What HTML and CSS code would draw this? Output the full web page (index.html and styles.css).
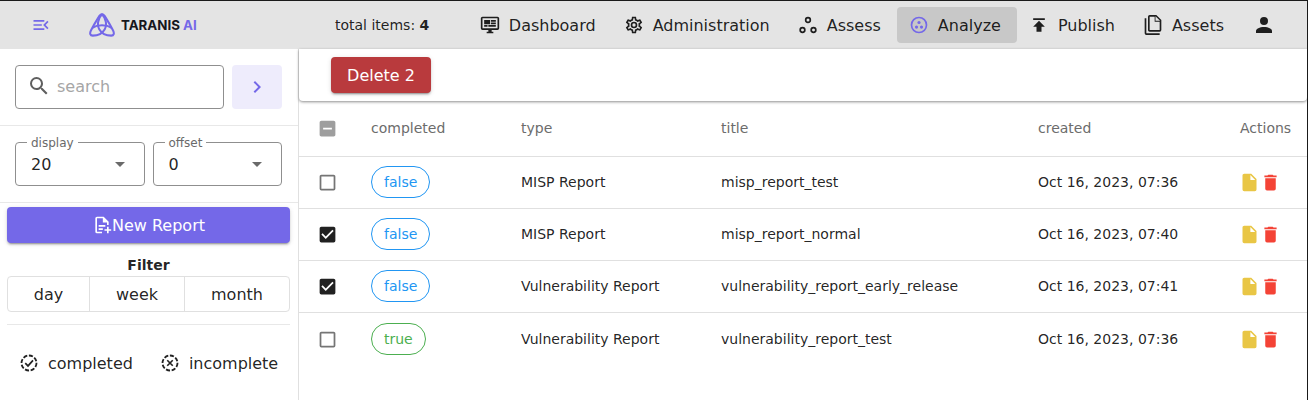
FILE: index.html
```html
<!DOCTYPE html>
<html lang="en">
<head>
    <meta charset="UTF-8">
    <title>Taranis AI</title>
    <link rel="stylesheet" href="styles.css">
</head>
<body>
    <svg class="sprites" width="0" height="0">
        <symbol id="i-file" viewBox="0 0 24 24"><path d="M13,9V3.5L18.5,9M6,2C4.89,2 4,2.89 4,4V20A2,2 0 0,0 6,22H18A2,2 0 0,0 20,20V8L14,2H6Z"/></symbol>
        <symbol id="i-delete" viewBox="0 0 24 24"><path d="M19,4H15.5L14.5,3H9.5L8.5,4H5V6H19M6,19A2,2 0 0,0 8,21H16A2,2 0 0,0 18,19V7H6V19Z"/></symbol>
        <symbol id="i-blank" viewBox="0 0 24 24"><path d="M19,3H5C3.89,3 3,3.89 3,5V19A2,2 0 0,0 5,21H19A2,2 0 0,0 21,19V5C21,3.89 20.1,3 19,3M19,5V19H5V5H19Z"/></symbol>
        <symbol id="i-marked" viewBox="0 0 24 24"><path d="M10,17L5,12L6.41,10.59L10,14.17L17.59,6.58L19,8M19,3H5C3.89,3 3,3.89 3,5V19A2,2 0 0,0 5,21H19A2,2 0 0,0 21,19V5C21,3.89 20.1,3 19,3Z"/></symbol>
        <symbol id="i-minus" viewBox="0 0 24 24"><path d="M17,13H7V11H17M19,3H5C3.89,3 3,3.89 3,5V19C3,20.1 3.9,21 5,21H19C20.1,21 21,20.1 21,19V5C21,3.89 20.1,3 19,3Z"/></symbol>
        <symbol id="i-caret" viewBox="0 0 24 24"><path d="M7,10L12,15L17,10H7Z"/></symbol>
    </svg>

    <header class="topbar">
        <svg class="icon menu-toggle" viewBox="0 0 24 24"><path d="M21,15.61L19.59,17L14.58,12L19.59,7L21,8.39L17.44,12L21,15.61M3,6H16V8H3V6M3,13V11H13V13H3M3,18V16H16V18H3Z"/></svg>
        <div class="logo">
            <svg class="logo-mark" viewBox="0 0 28 26">
                <path d="M14 1.500 C9.500 6 8.500 13 11 17.500 C13.500 22 19 24.500 24 24.500 C27 24.500 27.500 22 26 19 C24 15 20.500 9 18 5 C16.500 2.500 15.500 1 14 1.500 Z"/>
                <path d="M14 1.500 C18.500 6 19.500 13 17 17.500 C14.500 22 9 24.500 4 24.500 C1 24.500 0.500 22 2 19 C4 15 7.500 9 10 5 C11.500 2.500 12.500 1 14 1.500 Z"/>
                <path d="M3.500 16 C9 12.500 19 12.500 24.500 16"/>
            </svg>
            <span class="logo-text">TARANIS <span class="logo-ai">AI</span></span>
        </div>
        <div class="total">total items: <strong>4</strong></div>
        <nav class="nav">
            <a class="nav-btn">
                <svg class="icon" viewBox="0 0 24 24"><path d="M21,16H3V4H21M21,2H3C1.890,2 1,2.890 1,4V16A2,2 0 0,0 3,18H10V20H8V22H16V20H14V18H21A2,2 0 0,0 23,16V4C23,2.890 22.100,2 21,2M5,6H12V11H5V6M13,6H19V8H13V6M13,9H19V11H13V9M5,12H9V14H5V12M10,12H19V14H10V12Z"/></svg>
                Dashboard
            </a>
            <a class="nav-btn">
                <svg class="icon" viewBox="0 0 24 24"><path d="M12,8A4,4 0 0,1 16,12A4,4 0 0,1 12,16A4,4 0 0,1 8,12A4,4 0 0,1 12,8M12,10A2,2 0 0,0 10,12A2,2 0 0,0 12,14A2,2 0 0,0 14,12A2,2 0 0,0 12,10M10,22C9.750,22 9.540,21.820 9.500,21.580L9.130,18.930C8.500,18.680 7.960,18.340 7.440,17.940L4.950,18.950C4.730,19.030 4.460,18.950 4.340,18.730L2.340,15.270C2.210,15.050 2.270,14.780 2.460,14.630L4.570,12.970L4.500,12L4.570,11L2.460,9.370C2.270,9.220 2.210,8.950 2.340,8.730L4.340,5.270C4.460,5.050 4.730,4.960 4.950,5.050L7.440,6.050C7.960,5.660 8.500,5.320 9.130,5.070L9.500,2.420C9.540,2.180 9.750,2 10,2H14C14.250,2 14.460,2.180 14.500,2.420L14.870,5.070C15.500,5.320 16.040,5.660 16.560,6.050L19.050,5.050C19.270,4.960 19.540,5.050 19.660,5.270L21.660,8.730C21.790,8.950 21.730,9.220 21.540,9.370L19.430,11L19.500,12L19.430,13L21.540,14.630C21.730,14.780 21.790,15.050 21.660,15.270L19.660,18.730C19.540,18.950 19.270,19.040 19.050,18.950L16.560,17.950C16.040,18.340 15.500,18.680 14.870,18.930L14.500,21.580C14.460,21.820 14.250,22 14,22H10M11.250,4L10.880,6.610C9.680,6.860 8.620,7.500 7.850,8.390L5.440,7.350L4.690,8.650L6.800,10.200C6.400,11.370 6.400,12.640 6.800,13.800L4.680,15.360L5.430,16.660L7.860,15.620C8.630,16.500 9.680,17.140 10.870,17.380L11.240,20H12.760L13.130,17.390C14.320,17.140 15.370,16.500 16.140,15.620L18.570,16.660L19.320,15.360L17.200,13.810C17.600,12.640 17.600,11.370 17.200,10.200L19.310,8.650L18.560,7.350L16.150,8.390C15.380,7.500 14.320,6.860 13.120,6.620L12.750,4H11.250Z"/></svg>
                Administration
            </a>
            <a class="nav-btn">
                <svg class="icon outline" viewBox="0 0 24 24"><circle cx="12" cy="6" r="2.800"/><circle cx="5.400" cy="18" r="2.800"/><circle cx="18.600" cy="18" r="2.800"/></svg>
                Assess
            </a>
            <a class="nav-btn active">
                <svg class="icon accent" viewBox="0 0 24 24"><path d="M12,2A10,10 0 0,0 2,12A10,10 0 0,0 12,22A10,10 0 0,0 22,12A10,10 0 0,0 12,2M12,20A8,8 0 0,1 4,12A8,8 0 0,1 12,4A8,8 0 0,1 20,12A8,8 0 0,1 12,20Z"/><circle cx="12" cy="9" r="1.900"/><circle cx="9" cy="14.500" r="1.900"/><circle cx="15" cy="14.500" r="1.900"/></svg>
                Analyze
            </a>
            <a class="nav-btn">
                <svg class="icon" viewBox="0 0 24 24"><path d="M5,4V6H19V4H5M5,14H9V20H15V14H19L12,7L5,14Z"/></svg>
                Publish
            </a>
            <a class="nav-btn">
                <svg class="icon" viewBox="0 0 24 24"><path d="M15,7H20.500L15,1.500V7M8,0H16L22,6V18A2,2 0 0,1 20,20H8C6.890,20 6,19.100 6,18V2A2,2 0 0,1 8,0M4,4V22H20V24H4A2,2 0 0,1 2,22V4H4M8,2V18H20V8H14V2H8Z"/></svg>
                Assets
            </a>
            <a class="nav-user">
                <svg class="icon user-icon" viewBox="0 0 24 24"><path d="M12,4A4,4 0 0,1 16,8A4,4 0 0,1 12,12A4,4 0 0,1 8,8A4,4 0 0,1 12,4M12,14C16.420,14 20,15.790 20,18V20H4V18C4,15.790 7.580,14 12,14Z"/></svg>
            </a>
        </nav>
    </header>

    <div class="page">
        <aside class="sidebar">
            <div class="search-row">
                <div class="search-box">
                    <svg class="icon search-icon" viewBox="0 0 24 24"><path d="M9.500,3A6.500,6.500 0 0,1 16,9.500C16,11.110 15.410,12.590 14.440,13.730L14.710,14H15.500L20.500,19L19,20.500L14,15.500V14.710L13.730,14.440C12.590,15.410 11.110,16 9.500,16A6.500,6.500 0 0,1 3,9.500A6.500,6.500 0 0,1 9.500,3M9.500,5C7,5 5,7 5,9.500C5,12 7,14 9.500,14C12,14 14,12 14,9.500C14,7 12,5 9.500,5Z"/></svg>
                    <span class="placeholder">search</span>
                </div>
                <button class="search-go">
                    <svg class="icon accent chevron" viewBox="0 0 24 24"><path d="M8.590,16.580L13.170,12L8.590,7.410L10,6L16,12L10,18L8.590,16.580Z"/></svg>
                </button>
            </div>
            <div class="select-row">
                <div class="select">
                    <span class="select-label">display</span>
                    <span class="select-value">20</span>
                    <svg class="icon caret"><use href="#i-caret"/></svg>
                </div>
                <div class="select">
                    <span class="select-label">offset</span>
                    <span class="select-value">0</span>
                    <svg class="icon caret"><use href="#i-caret"/></svg>
                </div>
            </div>
            <div class="side-actions">
                <button class="new-report">
                    <svg class="icon" viewBox="0 0 24 24"><path d="M14,2H6A2,2 0 0,0 4,4V20A2,2 0 0,0 6,22H12V20H6V4H13V9H18V12H20V8L14,2M18,14V17H15V19H18V22H20V19H23V17H20V14H18M8,12H16V14H8V12M8,16H13V18H8V16Z"/></svg>New Report
                </button>
                <div class="filter-title">Filter</div>
                <div class="btn-group">
                    <a class="day">day</a>
                    <a class="week">week</a>
                    <a class="month">month</a>
                </div>
                <hr class="side-rule">
                <div class="chips">
                    <span class="chip">
                        <svg class="icon" viewBox="0 0 24 24"><circle class="dashed" cx="12" cy="12" r="9"/><path d="M7.500 12.200 L10.800 15.500 L16.800 8.800" class="tick"/></svg>
                        completed
                    </span>
                    <span class="chip">
                        <svg class="icon" viewBox="0 0 24 24"><circle class="dashed" cx="12" cy="12" r="9"/><path d="M8.700 8.700 L15.300 15.300 M15.300 8.700 L8.700 15.300" class="tick"/></svg>
                        incomplete
                    </span>
                </div>
            </div>
        </aside>

        <main class="content">
            <div class="toolbar">
                <button class="delete-btn">Delete 2</button>
            </div>
            <table class="reports">
                <thead>
                    <tr>
                        <th class="col-check"><svg class="icon check minus"><use href="#i-minus"/></svg></th>
                        <th class="col-status">completed</th>
                        <th class="col-type">type</th>
                        <th class="col-title">title</th>
                        <th class="col-created">created</th>
                        <th class="col-actions">Actions</th>
                    </tr>
                </thead>
                <tbody>
                    <tr>
                        <td><svg class="icon check blank"><use href="#i-blank"/></svg></td>
                        <td><span class="pill pill-false">false</span></td>
                        <td>MISP Report</td>
                        <td>misp_report_test</td>
                        <td>Oct 16, 2023, 07:36</td>
                        <td class="actions"><svg class="icon file"><use href="#i-file"/></svg><svg class="icon trash"><use href="#i-delete"/></svg></td>
                    </tr>
                    <tr>
                        <td><svg class="icon check"><use href="#i-marked"/></svg></td>
                        <td><span class="pill pill-false">false</span></td>
                        <td>MISP Report</td>
                        <td>misp_report_normal</td>
                        <td>Oct 16, 2023, 07:40</td>
                        <td class="actions"><svg class="icon file"><use href="#i-file"/></svg><svg class="icon trash"><use href="#i-delete"/></svg></td>
                    </tr>
                    <tr>
                        <td><svg class="icon check"><use href="#i-marked"/></svg></td>
                        <td><span class="pill pill-false">false</span></td>
                        <td>Vulnerability Report</td>
                        <td>vulnerability_report_early_release</td>
                        <td>Oct 16, 2023, 07:41</td>
                        <td class="actions"><svg class="icon file"><use href="#i-file"/></svg><svg class="icon trash"><use href="#i-delete"/></svg></td>
                    </tr>
                    <tr>
                        <td><svg class="icon check blank"><use href="#i-blank"/></svg></td>
                        <td><span class="pill pill-true">true</span></td>
                        <td>Vulnerability Report</td>
                        <td>vulnerability_report_test</td>
                        <td>Oct 16, 2023, 07:36</td>
                        <td class="actions"><svg class="icon file"><use href="#i-file"/></svg><svg class="icon trash"><use href="#i-delete"/></svg></td>
                    </tr>
                </tbody>
            </table>
        </main>
    </div>
</body>
</html>
```

FILE: styles.css
```css
* {
    box-sizing: border-box;
}

html, body {
    height: 100%;
}

body {
    margin: 0;
    overflow: hidden;
    font-family: "DejaVu Sans", sans-serif;
    font-size: 14px;
    color: rgba(0, 0, 0, 0.87);
    background: white;
    border-top: 1px solid #1a1a1a;
    border-right: 1px solid #1a1a1a;
}

.sprites {
    display: none;
}

.icon {
    width: 20px;
    height: 20px;
    flex: none;
    fill: currentColor;
}

.accent {
    fill: #7468e8;
}

button {
    font-family: inherit;
    border: none;
    cursor: pointer;
}

/* top bar */
.topbar {
    display: flex;
    align-items: center;
    height: 48px;
    background: #e4e4e4;
    padding-right: 20px;
}

.menu-toggle {
    width: 20px;
    margin-left: 31px;
    fill: #7468e8;
}

.logo {
    display: flex;
    align-items: center;
    margin-left: 38px;
    width: 246px;
}

.logo-mark {
    width: 26px;
    height: 24px;
    fill: none;
    stroke: #7468e8;
    stroke-width: 2.2;
}

.logo-text {
    margin-left: 6px;
    font-family: Inter, sans-serif;
    font-size: 13.3px;
    font-weight: 700;
    color: #16161c;
}

.logo-ai {
    color: #7468e8;
}

.total {
    white-space: nowrap;
}

.nav {
    display: flex;
    align-items: center;
    margin-left: auto;
}

.nav-btn {
    display: flex;
    align-items: center;
    height: 36px;
    padding: 0 16px 0 12px;
    border-radius: 4px;
    font-size: 16px;
    gap: 9px;
    white-space: nowrap;
}

.nav-btn.active {
    background: #c8c8c8;
}

.outline {
    fill: none;
    stroke: currentColor;
    stroke-width: 2;
}

.nav-user {
    display: flex;
    align-items: center;
    justify-content: center;
    width: 47px;
}

.user-icon {
    width: 24px;
    height: 24px;
}

/* page */
.page {
    display: flex;
    height: 351px;
}

.sidebar {
    width: 299px;
    flex: none;
    border-right: 1px solid #e0e0e0;
}

.search-row {
    display: flex;
    gap: 8px;
    padding: 16px 16px 16px 15px;
    border-bottom: 1px solid #e8e8e8;
}

.search-box {
    display: flex;
    align-items: center;
    width: 209px;
    height: 44px;
    padding: 0 0 2px 11px;
    border: 1px solid #8f8f8f;
    border-radius: 4px;
}

.search-icon {
    width: 24px;
    height: 24px;
    fill: #5f5f5f;
}

.placeholder {
    margin-left: 6px;
    font-size: 16px;
    color: #a6a6a6;
}

.search-go {
    display: flex;
    align-items: center;
    justify-content: center;
    width: 50px;
    height: 44px;
    padding: 0;
    border-radius: 4px;
    background: #eeecfc;
}

.chevron {
    width: 24px;
    height: 24px;
}

.select-row {
    display: flex;
    gap: 8px;
    padding: 16px 16px 16px 15px;
    border-bottom: 1px solid #e8e8e8;
}

.select {
    position: relative;
    display: flex;
    align-items: center;
    justify-content: space-between;
    flex: 1;
    height: 44px;
    padding: 0 12px 0 15px;
    border: 1px solid #8f8f8f;
    border-radius: 4px;
}

.select-label {
    position: absolute;
    top: -7px;
    left: 11px;
    padding: 0 4px;
    font-size: 12px;
    line-height: 14px;
    color: #6a6a6a;
    background: white;
}

.select-value {
    font-size: 16px;
}

.caret {
    width: 24px;
    height: 24px;
    fill: #6a6a6a;
}

.side-actions {
    padding: 4px 8px 0 7px;
}

.new-report {
    display: flex;
    align-items: center;
    justify-content: center;
    width: 100%;
    height: 36px;
    border-radius: 4px;
    background: #7468e8;
    color: white;
    font-size: 16px;
    box-shadow: 0 3px 1px -2px rgba(0, 0, 0, 0.2), 0 2px 2px rgba(0, 0, 0, 0.14), 0 1px 5px rgba(0, 0, 0, 0.12);
}

.filter-title {
    margin-top: 14px;
    font-size: 14px;
    font-weight: 700;
    line-height: 17px;
    text-align: center;
}

.btn-group {
    display: flex;
    height: 36px;
    margin-top: 2px;
    border: 1px solid #e0e0e0;
    border-radius: 4px;
    font-size: 16px;
}

.btn-group a {
    display: flex;
    align-items: center;
    justify-content: center;
    border-right: 1px solid #e0e0e0;
}

.btn-group .day {
    width: 82px;
}

.btn-group .week {
    width: 95px;
}

.btn-group .month {
    flex: 1;
    border-right: none;
}

.side-rule {
    margin: 12px 0 0;
    border: none;
    border-top: 1px solid #e8e8e8;
}

.chips {
    display: flex;
    gap: 27px;
    margin-top: 28px;
    padding-left: 12px;
    font-size: 16px;
}

.chip {
    display: flex;
    align-items: center;
    gap: 9px;
    white-space: nowrap;
}

.dashed {
    fill: none;
    stroke: currentColor;
    stroke-width: 2.2;
    stroke-dasharray: 5 2;
}

.tick {
    fill: none;
    stroke: currentColor;
    stroke-width: 2;
}

/* report table */
.content {
    flex: 1;
    min-width: 0;
}

.toolbar {
    height: 52px;
    padding: 8px 0 0 32px;
    border-radius: 0 0 4px 4px;
    box-shadow: 0 1px 3px rgba(0, 0, 0, 0.45);
}

.delete-btn {
    width: 100px;
    height: 36px;
    border-radius: 4px;
    background: #b93a3d;
    color: white;
    font-size: 16px;
    box-shadow: 0 3px 1px -2px rgba(0, 0, 0, 0.2), 0 2px 2px rgba(0, 0, 0, 0.14), 0 1px 5px rgba(0, 0, 0, 0.12);
}

.reports {
    width: 100%;
    table-layout: fixed;
    border-collapse: collapse;
}

.reports th,
.reports td {
    padding: 0 16px;
    text-align: left;
    font-weight: 400;
    white-space: nowrap;
}

.reports th {
    height: 55px;
    color: #6c6c6c;
    border-bottom: 1px solid #e0e0e0;
}

.reports td {
    height: 52px;
    border-bottom: 1px solid #e0e0e0;
}

.reports tr:last-child td {
    height: 54px;
    border-bottom: none;
}

.col-check {
    width: 56px;
}

.col-status {
    width: 150px;
}

.col-type {
    width: 200px;
}

.col-title {
    width: 317px;
}

.col-created {
    width: 202px;
}

.reports .col-actions {
    text-align: right;
}

.check {
    display: block;
    width: 21px;
    height: 21px;
    margin-left: 1.5px;
}

.blank {
    fill: #757575;
}

.minus {
    fill: #9e9e9e;
}

.pill {
    display: inline-flex;
    align-items: center;
    height: 32px;
    padding: 0 12px;
    border-radius: 16px;
    border: 1px solid currentColor;
}

.pill-false {
    color: #2196f3;
}

.pill-true {
    color: #4caf50;
}

.reports .actions {
    padding-left: 15px;
}

.file {
    fill: #e9c645;
}

.trash {
    fill: #f44336;
}

.file, .trash {
    width: 21px;
    height: 21px;
    vertical-align: middle;
}
```
